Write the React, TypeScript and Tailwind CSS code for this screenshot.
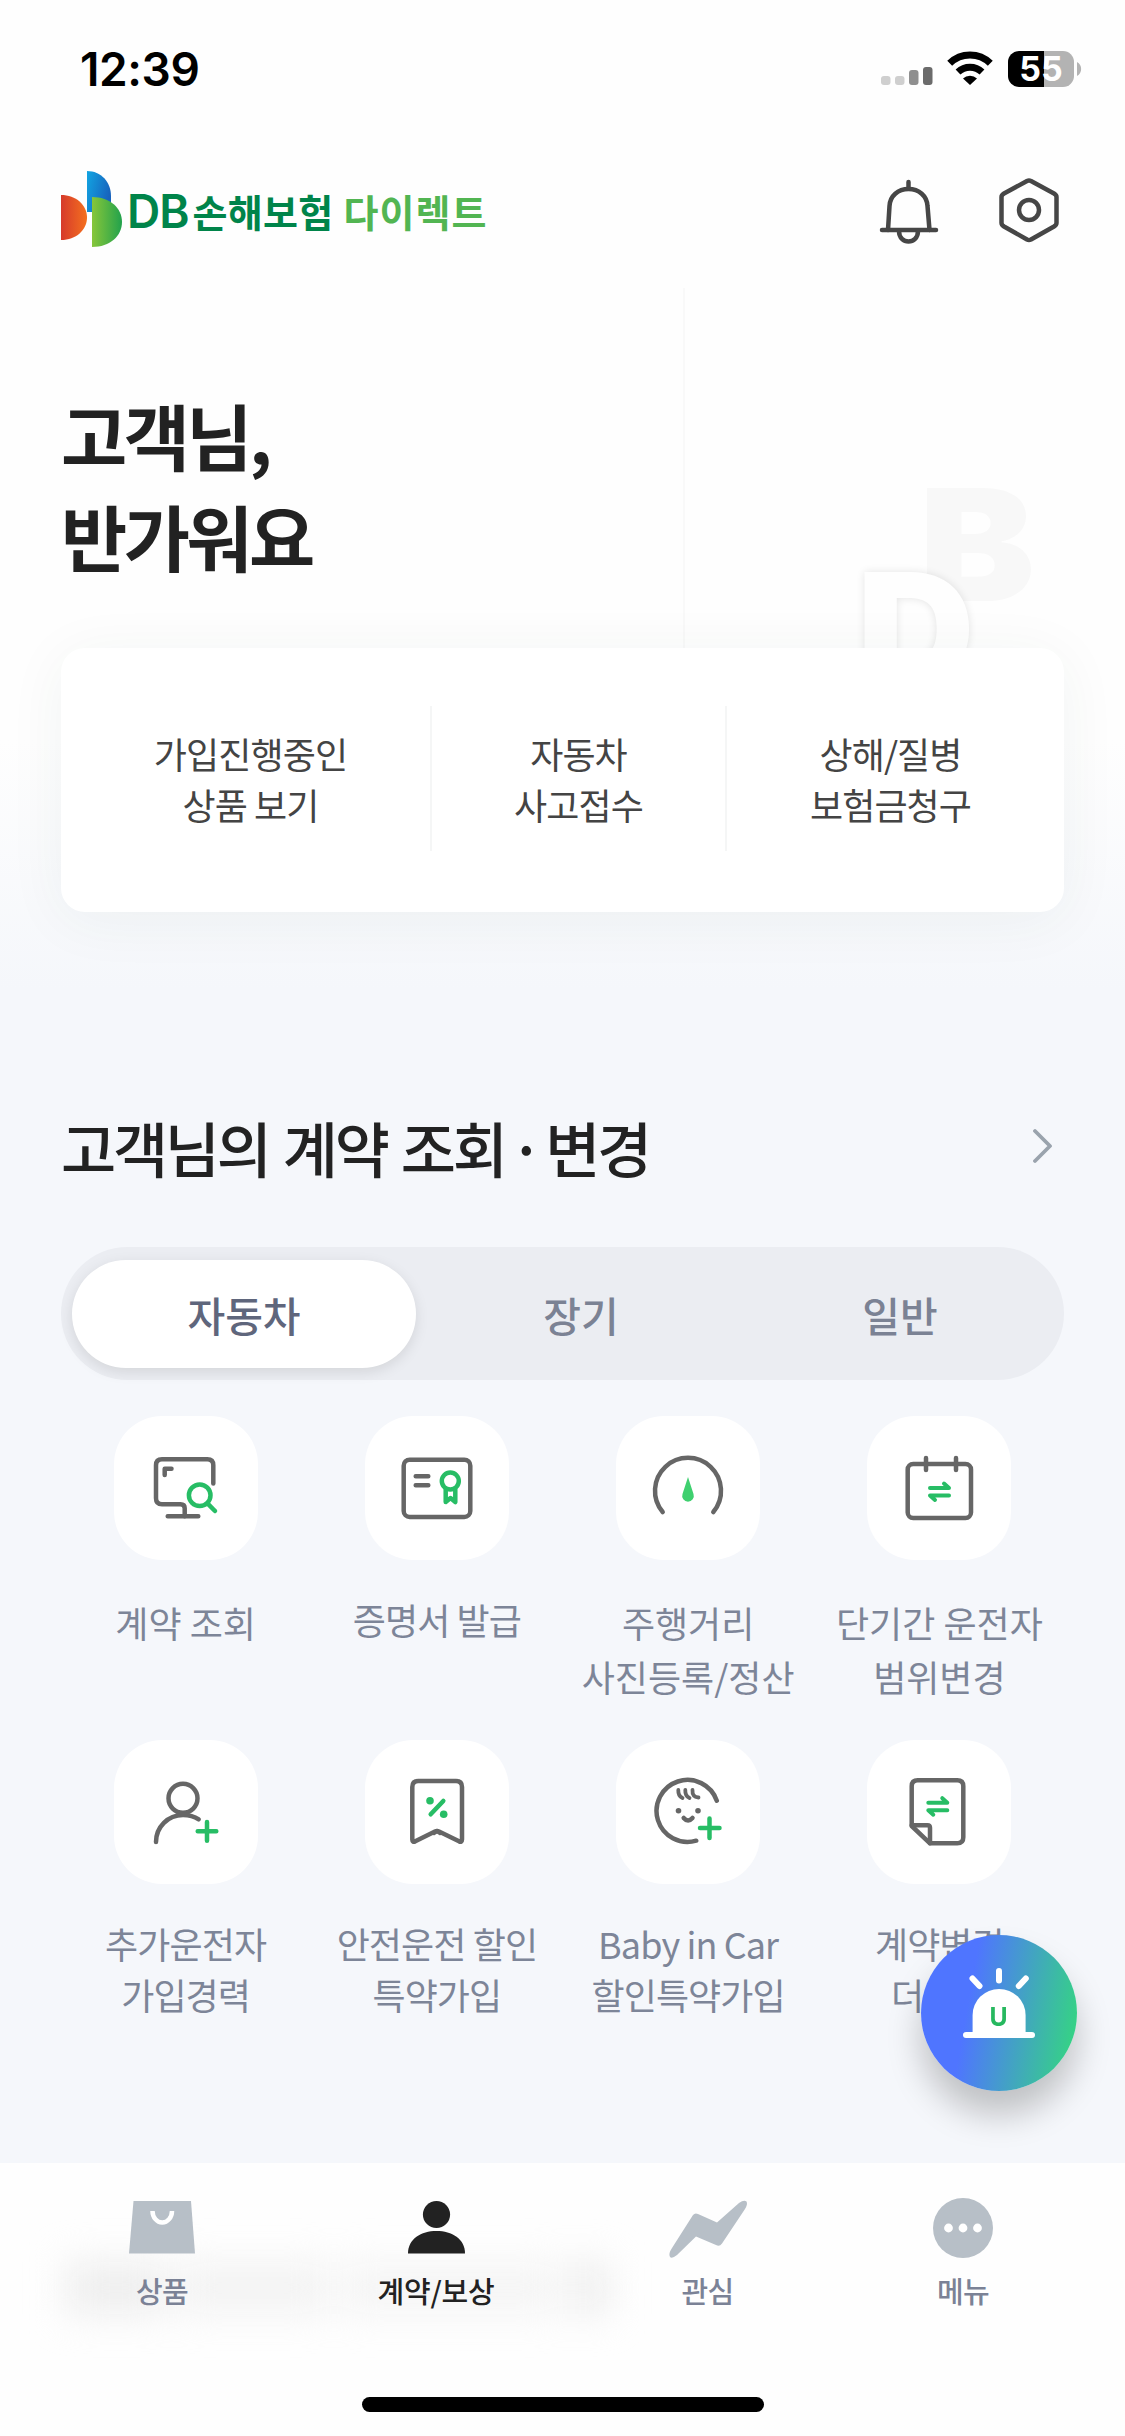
import type { ReactNode } from "react";

const GRAY = "#666666";
const GREEN = "#27bd65";

const StatusBar = () => (
  <div className="flex h-[141px] items-start justify-between pl-[80px] pr-[43px] pt-[51px]">
    <span className="font-['Inter',sans-serif] text-[46px] font-semibold leading-9 tracking-[-0.400px] text-black">
      12:39
    </span>
    <div className="flex items-start">
      <svg width="52" height="36" viewBox="0 0 52 36">
        <rect x="0" y="25" width="9.5" height="9" rx="3" fill="#cfcfcf" />
        <rect x="14" y="25" width="9.5" height="9" rx="3" fill="#cfcfcf" />
        <rect x="28" y="19" width="9.5" height="15" rx="3" fill="#8f8f8f" />
        <rect x="42" y="16" width="9.5" height="18" rx="3" fill="#6b6b6b" />
      </svg>
      <svg className="ml-[14px]" width="46" height="36" viewBox="0 0 46 36">
        <g fill="none" stroke="#000" strokeWidth="7">
          <path d="M2.7 12.3 A29 29 0 0 1 43.3 12.3" />
          <path d="M11 21 A17.5 17.5 0 0 1 35 21" />
        </g>
        <path d="M23 34 L16 27.5 A10 10 0 0 1 30 27.5 Z" fill="#000" />
      </svg>
      <div className="ml-[15px] flex h-9 w-[66px] items-center justify-center rounded-[11px] bg-[linear-gradient(90deg,#000_54.5%,#b3b3b3_54.5%)] font-['Inter',sans-serif] text-[34px] font-bold leading-9 text-white">
        55
      </div>
      <svg className="ml-[3px] mt-[11px]" width="5" height="14" viewBox="0 0 5 14">
        <path d="M0 0 A8 8 0 0 1 0 14 Z" fill="#b3b3b3" />
      </svg>
    </div>
  </div>
);

const LogoMark = () => (
  <svg width="64" height="80" viewBox="0 0 64 80">
    <defs>
      <linearGradient id="blue" x1="0" x2="1" y1="0" y2="0.4">
        <stop offset="0" stopColor="#12a5e2" />
        <stop offset="1" stopColor="#1763bd" />
      </linearGradient>
      <linearGradient id="orange">
        <stop offset="0" stopColor="#d63a2b" />
        <stop offset="1" stopColor="#f4701f" />
      </linearGradient>
      <linearGradient id="green">
        <stop offset="0" stopColor="#87c63a" />
        <stop offset="1" stopColor="#22a24c" />
      </linearGradient>
    </defs>
    <path d="M27 1 C41 1 51 12 51 26 V42 H27 Z" fill="url(#blue)" />
    <path d="M1 25 C16 25 27 35 27 47.500 C27 60 16 70 1 70 Z" fill="url(#orange)" />
    <path d="M32 27 C50 27 62 38 62 52 C62 66 50 77 32 77 Z" fill="url(#green)" />
  </svg>
);

const Header = () => (
  <header className="flex h-[141px] items-start justify-between pl-[60px] pr-[66px] pt-[29px]">
    <div className="flex items-start">
      <LogoMark />
      <div className="ml-[3px] mt-[16px] flex items-center leading-[48px]">
        <span className="mt-px font-['Inter',sans-serif] text-[46px] font-semibold tracking-[-1px] text-[#00844a]">
          DB
        </span>
        <span className="ml-[4px] text-[38px] font-bold tracking-[0.300px] text-[#00844a]">손해보험</span>
        <span className="ml-[10px] text-[38px] font-bold tracking-[1px] text-[#52b552]">다이렉트</span>
      </div>
    </div>
    <div className="flex items-start pt-[6px]">
      <svg width="60" height="70" viewBox="0 0 60 70" fill="none" stroke="#464646" strokeWidth="4.500" strokeLinecap="round">
        <path d="M29.500 6 V12" />
        <path d="M9 54 L10.500 30 C11 20 19 13 29.500 13 S48 20 48.500 30 L50.500 54" />
        <path d="M3 54 H57" />
        <path d="M20 55 C20 69 39 69 39 55" />
      </svg>
      <svg className="ml-[60px]" width="60" height="70" viewBox="0 0 60 70" fill="none" stroke="#464646" strokeWidth="4.500" strokeLinejoin="round">
        <path d="M28 5 Q30 4 32 5 L55 17.500 Q57.500 19 57.500 21 V47 Q57.500 49 55 50.500 L32 63.500 Q30 64.500 28 63.500 L5 50.500 Q2.500 49 2.500 47 V21 Q2.500 19 5 17.500 Z" />
        <circle cx="30" cy="34" r="10" />
      </svg>
    </div>
  </header>
);

const Hero = () => (
  <div className="relative h-[366px] overflow-hidden pl-[61px] pt-[101px]">
    <div className="absolute left-[683px] top-[6px] h-[360px] w-[2px] bg-[#f9f9f9]" />
    <span className="absolute left-[919px] top-[185px] origin-left scale-x-112 font-['Inter',sans-serif] text-[155px] font-black leading-[155px] text-[#f8f8f8]">
      B
    </span>
    <span className="absolute left-[857px] top-[269px] origin-left scale-x-105 font-['Inter',sans-serif] text-[155px] font-black leading-[155px] text-[#fefefe] [text-shadow:0_0_8px_rgba(0,0,0,0.11)]">
      D
    </span>
    <h1 className="text-[72px] font-bold leading-[101px] tracking-[-3.600px] text-[#222]">
      고객님,
      <br />
      반가워요
    </h1>
  </div>
);

const QuickLink = ({ children }: { children: ReactNode }) => (
  <a className="flex items-center justify-center text-center text-[36px] leading-[51px] tracking-[-0.900px] text-[#444]">
    {children}
  </a>
);

const QuickCard = () => (
  <div className="relative mx-[61px] h-[264px] rounded-[24px] bg-white shadow-[0_8px_60px_rgba(40,70,55,0.055)]">
    <div className="grid h-[260px] grid-cols-[369px_297px_337px] pb-[57px] pt-[58px]">
      <div className="flex justify-center pl-[10px]">
        <QuickLink>
          가입진행중인
          <br />
          상품 보기
        </QuickLink>
      </div>
      <div className="flex items-center justify-center border-x-2 border-[#f5f6f6]">
        <QuickLink>
          자동차
          <br />
          사고접수
        </QuickLink>
      </div>
      <div className="flex justify-center pr-[10px]">
        <QuickLink>
          상해/질병
          <br />
          보험금청구
        </QuickLink>
      </div>
    </div>
  </div>
);

const Tabs = () => (
  <div className="mx-[61px] mt-[42px] flex h-[133px] items-center rounded-full bg-[#ebedf2] pl-[11px] text-[41px] font-medium leading-[60px] text-[#7b8294]">
    <div className="flex h-[108px] w-[344px] items-center justify-center rounded-full bg-white text-[#5f667c] shadow-[0_4px_14px_rgba(0,0,0,0.1)]">
      자동차
    </div>
    <div className="w-[330px] text-center">장기</div>
    <div className="w-[308px] text-center">일반</div>
  </div>
);

const Swap = () => (
  <g stroke={GREEN} strokeWidth="4">
    <path d="M0 5 H19 L14 0.500" />
    <path d="M19 12.500 H0 L5 17" />
  </g>
);

const menu = [
  {
    label: ["계약 조회"],
    roomy: true,
    icon: (
      <>
        <path d="M99.300 67.500 V49.300 Q99.300 43.300 93.300 43.300 H48 Q42 43.300 42 49.300 V82.300 Q42 88.300 48 88.300 H66.500 Q70.700 88.300 70.700 92.300 V100.300" />
        <path d="M53.700 100.300 H84.300 M50.700 59 V52.700 H57.500" />
        <g stroke={GREEN}>
          <circle cx="85.700" cy="79.300" r="10.800" />
          <path d="M93.700 87.700 L101 95" />
        </g>
      </>
    ),
  },
  {
    label: ["증명서 발급"],
    icon: (
      <>
        <rect x="38.700" y="43.700" width="66.600" height="57.300" rx="6" />
        <path d="M50.700 60.300 H63.300 M50.700 69.300 H63.300" />
        <g stroke={GREEN}>
          <circle cx="85.300" cy="65" r="8.500" />
          <path d="M80.700 73.500 V86 L85.500 82 L90.300 86 V73.500" />
        </g>
      </>
    ),
  },
  {
    label: ["주행거리", "사진등록/정산"],
    roomy: true,
    icon: (
      <>
        <path d="M46.700 96 A33 33 0 1 1 97.300 96" />
        <path d="M72 61 L66.500 78 A5.800 5.800 0 1 0 77.500 78 Z" fill="#3fd06f" stroke="none" />
      </>
    ),
  },
  {
    label: ["단기간 운전자", "범위변경"],
    roomy: true,
    icon: (
      <>
        <rect x="40.700" y="48" width="63.300" height="54" rx="5.500" />
        <path d="M59 42 V54 M89 42 V54" />
        <g transform="translate(63 67)">
          <Swap />
        </g>
      </>
    ),
  },
  {
    label: ["추가운전자", "가입경력"],
    icon: (
      <>
        <circle cx="69" cy="58.300" r="14.500" />
        <path d="M42 102 C42 87 54 75 69 75 C75 75 80.500 76.500 84.700 79.300" />
        <path d="M83.700 91.300 H102.300 M93 82 V100.700" stroke={GREEN} />
      </>
    ),
  },
  {
    label: ["안전운전 할인", "특약가입"],
    icon: (
      <>
        <path d="M47.300 47 Q47.300 41 53.300 41 H91 Q97 41 97 47 V99.500 Q97 102.500 94 101.300 L74 91.500 Q72 90.500 70 91.500 L50.300 101.300 Q47.300 102.500 47.300 99.500 Z" />
        <path d="M69 93 L72 91 L75 93" />
        <path d="M78.300 61 L65.700 74.300" stroke={GREEN} />
        <circle cx="65" cy="60.700" r="3.800" fill={GREEN} stroke="none" />
        <circle cx="78.700" cy="74.300" r="3.800" fill={GREEN} stroke="none" />
      </>
    ),
  },
  {
    label: ["Baby in Car", "할인특약가입"],
    icon: (
      <>
        <path d="M100.800 60.700 A31 31 0 1 0 80.200 100.700" />
        <path d="M62.300 50 Q62 56 66.500 58 M69.300 50 Q69 56 73.500 58 M76.500 50 Q76 57 82.500 57.500" strokeWidth="3.800" />
        <path d="M67.700 78 Q72 83 76.500 78" />
        <circle cx="62.500" cy="70.700" r="2.800" fill={GRAY} stroke="none" />
        <circle cx="82" cy="70.700" r="2.800" fill={GRAY} stroke="none" />
        <path d="M84 88 H103.500 M93.500 78.500 V98" stroke={GREEN} />
      </>
    ),
  },
  {
    label: ["계약변경", "더보기"],
    icon: (
      <>
        <path d="M44.700 86 V46.300 Q44.700 40.300 50.700 40.300 H90.300 Q96.300 40.300 96.300 46.300 V97.300 Q96.300 103.300 90.300 103.300 H63 Z" />
        <path d="M44.700 85.300 H60.500 Q63 85.300 63 87.800 V103.300" />
        <g transform="translate(61.300 57.700)">
          <Swap />
        </g>
      </>
    ),
  },
];

const MenuGrid = () => (
  <div className="mx-[60px] mt-[36px] grid grid-cols-4 auto-rows-[324px]">
    {menu.map((item) => (
      <div key={item.label[0]} className="flex flex-col items-center">
        <div className="h-36 w-36 rounded-[48px] bg-white">
          <svg
            width="144"
            height="144"
            viewBox="0 0 144 144"
            fill="none"
            stroke={GRAY}
            strokeWidth="4.500"
            strokeLinecap="round"
            strokeLinejoin="round"
          >
            {item.icon}
          </svg>
        </div>
        <div
          className={
            item.roomy
              ? "mt-[35px] whitespace-nowrap text-center text-[36px] leading-[54px] text-[#7d8598]"
              : "mt-[34px] whitespace-nowrap text-center text-[36px] leading-[51px] tracking-[-0.900px] text-[#7d8598]"
          }
        >
          {item.label.map((line) => (
            <p key={line}>{line}</p>
          ))}
        </div>
      </div>
    ))}
  </div>
);

const SirenButton = () => (
  <button className="absolute left-[921px] top-[1935px] flex h-[156px] w-[156px] justify-center rounded-full bg-[linear-gradient(100deg,#4f75ff_32%,#36d088_92%)] shadow-[0_24px_34px_rgba(0,0,0,0.22)]">
    <svg className="absolute left-0 top-0" width="156" height="156" viewBox="0 0 156 156">
      <path d="M51.600 100 V80 A26.500 26 0 0 1 104.600 80 V100 Z" fill="#fff" />
      <g stroke="#fff" strokeWidth="6" strokeLinecap="round">
        <path d="M45 100 H111" />
        <path d="M78 36 V45.500 M51.500 43.500 L58.500 51 M104.800 43.500 L97.800 51" />
      </g>
    </svg>
    <span className="relative mt-[66px] scale-x-95 font-['Inter',sans-serif] text-[26px] font-bold leading-8 text-[#27b85f]">
      U
    </span>
  </button>
);

const NavItem = ({ icon, label, active }: { icon: ReactNode; label: string; active?: boolean }) => (
  <div className="flex flex-col items-center">
    <svg width="80" height="62" viewBox="0 0 80 62" fill={active ? "#222" : "#b7bfc7"}>
      {icon}
    </svg>
    <span
      className={
        active
          ? "mt-[10px] text-[29px] font-medium leading-[42px] tracking-[-0.200px] text-[#222]"
          : "mt-[10px] text-[29px] font-medium leading-[42px] tracking-[-0.600px] text-[#7b8296]"
      }
    >
      {label}
    </span>
  </div>
);

const BottomNav = () => (
  <nav className="absolute inset-x-0 bottom-0 h-[273px] overflow-hidden bg-[#fefefe]">
    {/* page content showing faintly through the frosted bar */}
    <div className="absolute left-[66px] top-[99px] flex gap-3 blur-[18px]">
      <div className="h-[52px] w-[100px] bg-[#eeeeee]" />
      <div className="h-[52px] w-[150px] bg-[#f3f3f3]" />
      <div className="h-[52px] w-[220px] bg-[#f5f5f5]" />
      <div className="h-[52px] w-[36px] bg-[#ededed]" />
    </div>
    <div className="relative grid grid-cols-[274px_274px_269px_242px] pl-[25px] pt-[34px]">
      <NavItem
        label="상품"
        icon={
          <>
            <path d="M11.500 4 H69 L73 56.500 H7 Z" />
            <path d="M30.500 14 A9.700 11.500 0 0 0 50 14" fill="none" stroke="#fff" strokeWidth="4.500" />
          </>
        }
      />
      <NavItem
        label="계약/보상"
        active
        icon={
          <>
            <circle cx="40.500" cy="17.500" r="13.600" />
            <path d="M12 56.500 C12 42 25 34 40.500 34 S69 42 69 56.500 Z" />
          </>
        }
      />
      <NavItem
        label="관심"
        icon={
          <path d="M25 18 Q27 15.500 30 17 L49 25.500 L71 6 Q76 2.500 78.500 4.500 Q80 7 77 12 L54 46.500 Q51.500 50 48 48 L28 39.500 L9 58 Q4 62 2 60 Q0 57 4 51 Z" />
        }
      />
      <NavItem
        label="메뉴"
        icon={
          <>
            <circle cx="40" cy="31" r="30" />
            <circle cx="25.500" cy="31" r="4.400" fill="#fff" />
            <circle cx="40" cy="31" r="4.400" fill="#fff" />
            <circle cx="54.500" cy="31" r="4.400" fill="#fff" />
          </>
        }
      />
    </div>
    <div className="mx-auto mt-[86px] h-[15px] w-[402px] rounded-full bg-black" />
  </nav>
);

export default function App() {
  return (
    <div className="relative h-[2436px] w-[1125px] overflow-hidden bg-[linear-gradient(180deg,#fefefe_740px,#f5f7fb_990px)] font-['Noto_Sans_CJK_KR',sans-serif]">
      <StatusBar />
      <Header />
      <Hero />
      <QuickCard />
      <section className="mt-[183px]">
        <div className="flex h-[110px] items-start justify-between pl-[61px] pr-[72px] pt-[8px]">
          <h2 className="text-[60px] font-medium leading-[87px] tracking-[-3.300px] text-[#222] [word-spacing:4px]">
            고객님의 계약 조회<span className="[word-spacing:-5.500px]"> · </span>변경
          </h2>
          <svg className="mt-[25px]" width="20" height="36" viewBox="0 0 20 36" fill="none" stroke="#9aa3ad" strokeWidth="3.800" strokeLinecap="round" strokeLinejoin="round">
            <path d="M2 3 L17 18 L2 33" />
          </svg>
        </div>
        <Tabs />
        <MenuGrid />
      </section>
      <SirenButton />
      <BottomNav />
    </div>
  );
}
